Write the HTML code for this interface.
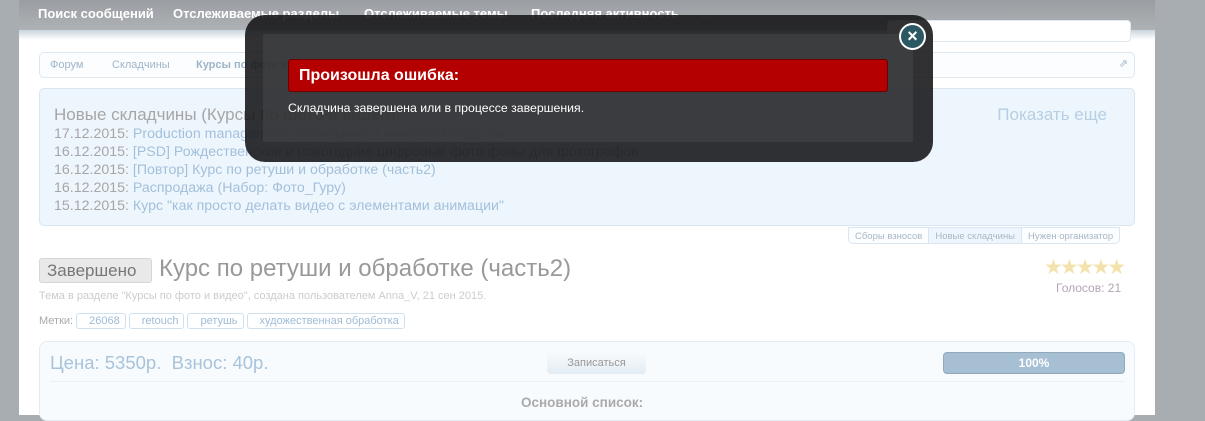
<!DOCTYPE html>
<html><head><meta charset="utf-8"><style>
*{margin:0;padding:0;box-sizing:border-box}
body{width:1205px;height:415px;overflow:hidden;background:#a7adb0;font-family:"Liberation Sans",sans-serif;position:relative}
.nav{position:absolute;left:19px;top:0;width:1136px;height:30px;background:linear-gradient(#9a9ea2,#aeb2b5);}
.nav span{position:absolute;top:6px;color:#fff;font-weight:bold;font-size:13px}
.page{position:absolute;left:19px;top:30px;width:1136px;height:385px;background:#fff}
.strip{position:absolute;left:19px;top:30px;width:1136px;height:10px;background:linear-gradient(#c9d6de,#fff)}
.abs{position:absolute}
.bc{left:39px;top:52px;width:1096px;height:26px;border:1px solid #dbe7f1;border-radius:5px;background:#fbfdff;font-size:11px;color:#9eb5c8}
.box{left:39px;top:88px;width:1096px;height:138px;border:1px solid #d9e6f1;border-radius:5px;background:#eef6fd}
.box .l{position:absolute;left:14px;font-size:14.2px;color:#a6a6a6}
.box .l a{color:#a3c0db}
.tabs{left:848px;top:227px;height:17px;border:1px solid #d9e6f1;border-radius:0 0 5px 5px;font-size:9.5px;color:#a8b8c5;background:#fbfdff;display:flex}
.tabs div{padding:3px 6px;border-right:1px solid #d9e6f1}
.tag{display:inline-block;border:1px solid #cfe0ee;border-radius:3px;padding:1px 5px 1px 12px;font-size:11px;color:#9ebbd6;margin-right:3px}
.modal{left:245px;top:15px;width:688px;height:147px;background:rgba(20,21,23,0.88);border-radius:20px}
.inner{left:263px;top:34px;width:650px;height:108px;background:rgba(70,71,73,0.55)}
.red{left:288px;top:59px;width:600px;height:33px;background:#b40000;border:1px solid #6e0000;border-radius:3px;color:#fff;font-weight:bold;font-size:16px;padding:7px 10px}
.close{left:899px;top:23px;width:27px;height:27px;border-radius:50%;background:#2c5864;border:2px solid #fff;color:#fff;font-size:18px;text-align:center;line-height:22px;font-weight:bold}
</style></head><body>
<div class="nav"><span style="left:19px">Поиск сообщений</span><span style="left:154px">Отслеживаемые разделы</span><span style="left:345px">Отслеживаемые темы</span><span style="left:512px">Последняя активность</span><span style="left:682px;color:#ccc">...</span></div>
<div class="page"></div>
<div class="strip"></div>
<div class="abs" style="left:887px;top:20px;width:244px;height:22px;border:1px solid #dfe8ee;border-radius:4px;background:#fff"></div>
<div class="abs bc"><span class="abs" style="left:10px;top:6px">Форум</span><span class="abs" style="left:72px;top:6px">Складчины</span><span class="abs" style="left:156px;top:6px;font-weight:bold">Курсы по фото и видео</span><span class="abs" style="right:6px;top:4px;font-size:11px">⇗</span></div>
<div class="abs box">
<div class="l" style="top:16px;font-size:17px">Новые складчины (Курсы по фото и видео):</div>
<div class="abs" style="right:27px;top:16px;font-size:17px;color:#b6cfe2">Показать еще</div>
<div class="l" style="top:37px">17.12.2015: <a>Production management. Менеджмент кинопроизводства</a></div>
<div class="l" style="top:55px">16.12.2015: <a>[PSD] Рождественские и новогодние цифровые фото фоны для фотографов</a></div>
<div class="l" style="top:73px">16.12.2015: <a>[Повтор] Курс по ретуши и обработке (часть2)</a></div>
<div class="l" style="top:91px">16.12.2015: <a>Распродажа (Набор: Фото_Гуру)</a></div>
<div class="l" style="top:109px">15.12.2015: <a>Курс "как просто делать видео с элементами анимации"</a></div>
</div>
<div class="abs tabs"><div>Сборы взносов</div><div style="background:#eef6fd">Новые складчины</div><div style="border:0">Нужен организатор</div></div>
<div class="abs" style="left:39px;top:258px;width:113px;height:25px;background:#e9e9e9;border:1px solid #d6d6d6;border-radius:3px;font-size:17px;color:#777;padding:2px 7px">Завершено</div>
<div class="abs" style="left:159px;top:255px;font-size:24px;color:#999">Курс по ретуши и обработке (часть2)</div>
<div class="abs" style="left:39px;top:290px;font-size:11px;color:#ccc">Тема в разделе "Курсы по фото и видео", создана пользователем Anna_V, 21 сен 2015.</div>
<div class="abs" style="left:1044px;top:255px;font-size:21px;color:#f4e2ac;letter-spacing:-3px">★★★★★</div>
<div class="abs" style="left:1056px;top:281px;font-size:12px;color:#b2a4b2">Голосов: 21</div>
<div class="abs" style="left:39px;top:313px;font-size:11px;color:#aaa">Метки: <span class="tag">26068</span><span class="tag">retouch</span><span class="tag">ретушь</span><span class="tag">художественная обработка</span></div>
<div class="abs" style="left:39px;top:341px;width:1096px;height:80px;border:1px solid #e3ebf2;border-radius:8px;background:#f7fbfe"></div>
<div class="abs" style="left:50px;top:352px;font-size:18.5px;color:#a8c3da">Цена: 5350р.&nbsp; Взнос: 40р.</div>
<div class="abs" style="left:547px;top:352px;width:99px;height:22px;border-radius:4px;background:linear-gradient(#f9fbfd,#e3ecf4);font-size:11px;color:#999;text-align:center;line-height:22px">Записаться</div>
<div class="abs" style="left:943px;top:352px;width:182px;height:22px;border-radius:4px;background:#a6bfd3;border:1px solid #91a9bb;font-size:12px;color:#fff;font-weight:bold;text-align:center;line-height:20px">100%</div>
<div class="abs" style="left:50px;top:381px;width:1075px;height:1px;background:#eaf0f5"></div>
<div class="abs" style="left:521px;top:395px;font-size:13.5px;font-weight:bold;color:#aaa">Основной список:</div>
<div class="abs modal"></div>
<div class="abs inner"></div>
<div class="abs red">Произошла ошибка:</div>
<div class="abs" style="left:288px;top:101px;font-size:12.3px;color:#fff">Складчина завершена или в процессе завершения.</div>
<div class="abs close">×</div>
</body></html>
